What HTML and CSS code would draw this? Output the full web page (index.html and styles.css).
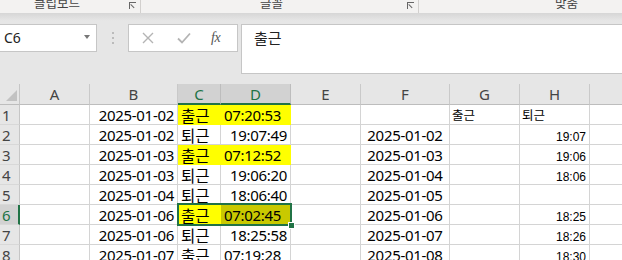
FILE: index.html
```html
<!DOCTYPE html>
<html lang="ko">
<head>
<meta charset="utf-8">
<link rel="stylesheet" href="styles.css">
</head>
<body>
<div class="app">
  <div class="ribbon">
    <div class="grp grp1"><span class="glabel">클립보드</span><span class="launch"></span></div>
    <div class="grp grp2"><span class="glabel">글꼴</span><span class="launch"></span></div>
    <div class="grp grp3"><span class="glabel">맞춤</span></div>
  </div>
  <div class="shade"></div>
  <div class="fbar">
    <div class="namebox"><span class="nbtext">C6</span><span class="caret"></span></div>
    <div class="dots"><i></i><i></i><i></i></div>
    <div class="btns">
      <svg class="ico" width="12" height="12" viewBox="0 0 12 12"><path d="M1 1 L11 11 M11 1 L1 11" stroke="#b4b4b4" stroke-width="1.4" fill="none"/></svg>
      <svg class="ico" width="14" height="12" viewBox="0 0 14 12"><path d="M1 6.5 L5 10.5 L13 1.5" stroke="#b4b4b4" stroke-width="1.8" fill="none"/></svg>
      <span class="fx">fx</span>
    </div>
    <div class="formula">출근</div>
  </div>
  <div class="sheetwrap">
    <div class="sheet">
      <div class="corner"><span class="tri"></span></div>
      <div class="ch">A</div>
      <div class="ch">B</div>
      <div class="ch sel">C</div>
      <div class="ch sel">D</div>
      <div class="ch">E</div>
      <div class="ch">F</div>
      <div class="ch">G</div>
      <div class="ch">H</div>
      <div class="ch last"></div>

      <div class="rh">1</div>
      <div class="c"></div>
      <div class="c r">2025-01-02</div>
      <div class="c ko y">출근</div>
      <div class="c l y">07:20:53</div>
      <div class="c"></div>
      <div class="c m"></div>
      <div class="c ks">출근</div>
      <div class="c ks">퇴근</div>
      <div class="c last"></div>

      <div class="rh">2</div>
      <div class="c"></div>
      <div class="c r">2025-01-02</div>
      <div class="c ko">퇴근</div>
      <div class="c r">19:07:49</div>
      <div class="c"></div>
      <div class="c m">2025-01-02</div>
      <div class="c"></div>
      <div class="c sm">19:07</div>
      <div class="c last"></div>

      <div class="rh">3</div>
      <div class="c"></div>
      <div class="c r">2025-01-03</div>
      <div class="c ko y">출근</div>
      <div class="c l y">07:12:52</div>
      <div class="c"></div>
      <div class="c m">2025-01-03</div>
      <div class="c"></div>
      <div class="c sm">19:06</div>
      <div class="c last"></div>

      <div class="rh">4</div>
      <div class="c"></div>
      <div class="c r">2025-01-03</div>
      <div class="c ko">퇴근</div>
      <div class="c r">19:06:20</div>
      <div class="c"></div>
      <div class="c m">2025-01-04</div>
      <div class="c"></div>
      <div class="c sm">18:06</div>
      <div class="c last"></div>

      <div class="rh">5</div>
      <div class="c"></div>
      <div class="c r">2025-01-04</div>
      <div class="c ko">퇴근</div>
      <div class="c r">18:06:40</div>
      <div class="c"></div>
      <div class="c m">2025-01-05</div>
      <div class="c"></div>
      <div class="c sm"></div>
      <div class="c last"></div>

      <div class="rh rsel">6</div>
      <div class="c"></div>
      <div class="c r">2025-01-06</div>
      <div class="c ko y">출근</div>
      <div class="c l ysel">07:02:45</div>
      <div class="c"></div>
      <div class="c m">2025-01-06</div>
      <div class="c"></div>
      <div class="c sm">18:25</div>
      <div class="c last"></div>

      <div class="rh">7</div>
      <div class="c"></div>
      <div class="c r">2025-01-06</div>
      <div class="c ko">퇴근</div>
      <div class="c r">18:25:58</div>
      <div class="c"></div>
      <div class="c m">2025-01-07</div>
      <div class="c"></div>
      <div class="c sm">18:26</div>
      <div class="c last"></div>

      <div class="rh">8</div>
      <div class="c"></div>
      <div class="c r">2025-01-07</div>
      <div class="c ko">출근</div>
      <div class="c l">07:19:28</div>
      <div class="c"></div>
      <div class="c m">2025-01-08</div>
      <div class="c"></div>
      <div class="c sm">18:30</div>
      <div class="c last"></div>
    </div>
    <div class="selbox"></div>
    <div class="handle"></div>
  </div>
</div>
</body>
</html>
```
FILE: styles.css
```css
* { box-sizing: border-box; }
html, body { margin: 0; padding: 0; }
body {
  width: 622px;
  height: 260px;
  overflow: hidden;
  background: #e6e6e6;
  font-family: "Noto Sans", "Noto Sans CJK KR", sans-serif;
  color: #000;
}
.app { width: 622px; }

/* ribbon */
.ribbon {
  height: 13px;
  background: #f3f2f1;
  display: flex;
  overflow: hidden;
}
.grp {
  position: relative;
  height: 13px;
  border-right: 1px solid #d2d0ce;
  display: flex;
}
.grp1 { width: 141px; }
.grp2 { width: 278px; }
.grp3 { flex: 1; border-right: none; }
.glabel {
  font-family: "Noto Sans CJK KR", sans-serif;
  font-size: 12.5px;
  line-height: 13px;
  color: #444;
  margin-top: -4px;
  white-space: nowrap;
}
.grp1 .glabel { margin-left: 34px; }
.grp2 .glabel { margin-left: 119px; }
.grp3 .glabel { margin-left: 136px; }
.launch {
  position: absolute;
  right: 4px;
  top: 2px;
  width: 7px;
  height: 7px;
  border-left: 1px solid #666;
  border-top: 1px solid #666;
}
.launch::after {
  content: "";
  position: absolute;
  left: 1px;
  top: 1px;
  width: 5px;
  height: 1px;
  background: #666;
  transform-origin: 0 0;
  transform: rotate(45deg);
}
.shade {
  height: 11px;
  background: linear-gradient(#d6d6d6, #e6e6e6 70%);
}

/* formula bar */
.fbar {
  display: flex;
  align-items: flex-start;
  height: 49px;
  margin-bottom: 11px;
}
.namebox {
  width: 98px;
  height: 28px;
  margin-left: -1px;
  background: #fff;
  border: 1px solid #c6c6c6;
  display: flex;
  align-items: center;
  justify-content: space-between;
  padding: 0 6px 0 4px;
}
.nbtext {
  font-size: 14px;
  color: #222;
  line-height: 20px;
}
.caret {
  width: 0;
  height: 0;
  border-left: 3.5px solid transparent;
  border-right: 3.5px solid transparent;
  border-top: 4px solid #777;
  margin-top: -2px;
}
.dots {
  width: 31px;
  height: 28px;
  display: flex;
  flex-direction: column;
  align-items: center;
  justify-content: center;
  gap: 3px;
}
.dots i {
  display: block;
  width: 2px;
  height: 2px;
  background: #bbb;
}
.btns {
  width: 110px;
  height: 28px;
  background: #fff;
  border: 1px solid #c6c6c6;
  display: flex;
  align-items: center;
  padding-left: 13px;
  gap: 0;
}
.btns .ico:first-child { margin-right: 23px; }
.btns .ico:nth-child(2) { margin-right: 20px; }
.fx {
  font-family: "Liberation Serif", serif;
  font-style: italic;
  font-size: 14px;
  color: #555;
  letter-spacing: -0.5px;
  line-height: 16px;
}
.formula {
  flex: 1;
  margin-left: 3px;
  margin-right: -2px;
  height: 50px;
  background: #fff;
  border: 1px solid #c6c6c6;
  font-family: "Noto Sans CJK KR", sans-serif;
  font-size: 15px;
  line-height: 18px;
  padding: 4px 0 0 12px;
  color: #222;
}

/* sheet */
.sheetwrap {
  position: relative;
  background: #fff;
}
.sheet {
  display: grid;
  grid-template-columns: 20px 70px 88px 43px 70px 70px 89px 70px 70px 40px;
  grid-template-rows: 21px repeat(8, 20px);
  width: 630px;
  font-size: 15px;
  line-height: 20px;
}
.corner {
  background: #e6e6e6;
  border-right: 1px solid #c6c6c6;
  border-bottom: 1px solid #bdbdbd;
  position: relative;
}
.tri {
  position: absolute;
  right: 2px;
  bottom: 3px;
  width: 0;
  height: 0;
  border-left: 11px solid transparent;
  border-bottom: 11px solid #c2c2c2;
}
.ch {
  background: #e6e6e6;
  border-right: 1px solid #c9c9c9;
  border-bottom: 1px solid #bdbdbd;
  text-align: center;
  color: #444;
  line-height: 21px;
}
.ch.sel {
  background: #d2d2d2;
  color: #217346;
  border-bottom: 2px solid #217346;
  border-right-color: #bdbdbd;
}
.rh {
  background: #e6e6e6;
  border-right: 1px solid #c6c6c6;
  border-bottom: 1px solid #d8d8d8;
  padding-left: 2px;
  color: #444;
}
.rh.rsel {
  background: #d2d2d2;
  color: #217346;
  border-right: 2px solid #217346;
}
.c {
  border-right: 1px solid #d4d4d4;
  border-bottom: 1px solid #d4d4d4;
  white-space: nowrap;
  overflow: hidden;
  padding: 0 3px;
}
.r { text-align: right; letter-spacing: -0.3px; }
.l { text-align: left; letter-spacing: -0.3px; }
.m { text-align: center; letter-spacing: -0.3px; }
.ko {
  font-family: "Noto Sans CJK KR", sans-serif;
  font-size: 15.5px;
}
.ks {
  font-family: "Noto Sans CJK KR", sans-serif;
  font-size: 12.5px;
  padding-left: 2px;
}
.sm {
  font-family: "Liberation Sans", sans-serif;
  font-size: 12px;
  text-align: right;
  padding-top: 2px;
}
.y {
  background: #ffff00;
  border-color: #ffff00;
}
.ysel {
  background: #c9c900;
  border-color: #c9c900;
}
.last { border-right: none; }

.selbox {
  position: absolute;
  left: 177px;
  top: 119px;
  width: 115px;
  height: 23px;
  border: 2px solid #217346;
  pointer-events: none;
}
.handle {
  position: absolute;
  left: 288px;
  top: 138px;
  width: 7px;
  height: 7px;
  background: #217346;
  border: 1px solid #fff;
}
```
